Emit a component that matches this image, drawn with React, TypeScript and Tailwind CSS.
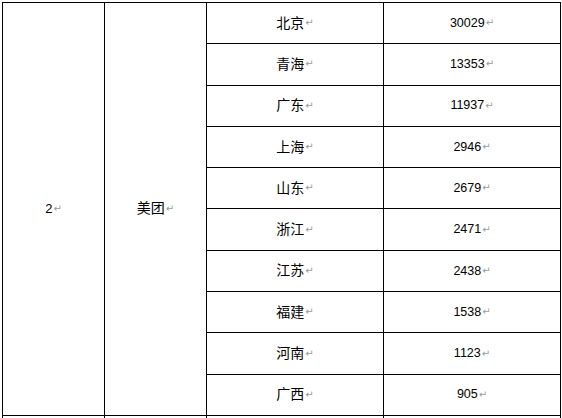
const rows = [
  ["北京", "30029"],
  ["青海", "13353"],
  ["广东", "11937"],
  ["上海", "2946"],
  ["山东", "2679"],
  ["浙江", "2471"],
  ["江苏", "2438"],
  ["福建", "1538"],
  ["河南", "1123"],
  ["广西", "905"],
];

const cjk = "font-['Liberation_Sans','Noto_Sans_CJK_SC',sans-serif]";

const Mark = () => (
  <span className="ml-px font-['DejaVu_Sans',sans-serif] text-[10px] leading-none text-[#9a9a9a]">↵</span>
);

const App = () => {
  return (
    <div className="h-[418px] w-[562px] overflow-hidden bg-white pl-[2px] pt-[2px]">
      <div className="grid w-[559px] grid-cols-[101px_101px_176px_176px] grid-rows-[repeat(11,40.3px)] gap-px bg-black p-px">
        <div className={`row-span-10 flex items-center justify-center bg-white text-[13px] text-black ${cjk}`}>
          <span>2</span>
          <Mark />
        </div>
        <div className={`row-span-10 flex items-center justify-center bg-white text-[14px] text-black ${cjk}`}>
          <span>美团</span>
          <Mark />
        </div>
        {rows.map(([prov, num]) => (
          <div key={prov} className="contents">
            <div className={`flex items-center justify-center bg-white text-[14px] text-black ${cjk}`}>
              <span>{prov}</span>
              <Mark />
            </div>
            <div className="flex items-center justify-center bg-white font-['Liberation_Sans',sans-serif] text-[12.5px] text-black">
              <span>{num}</span>
              <Mark />
            </div>
          </div>
        ))}
        <div className="bg-white" />
        <div className="bg-white" />
        <div className="bg-white" />
        <div className="bg-white" />
      </div>
    </div>
  );
};

export default App;
